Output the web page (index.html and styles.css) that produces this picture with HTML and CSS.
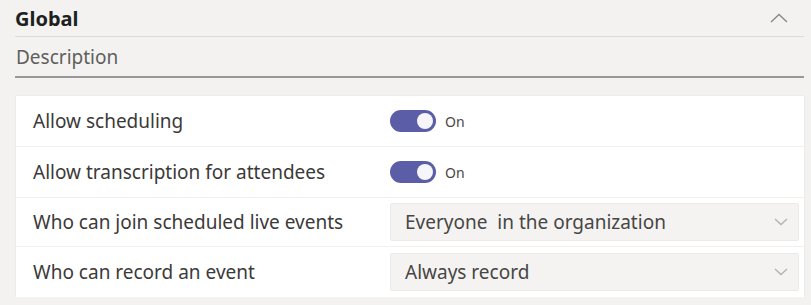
FILE: index.html
```html
<!DOCTYPE html>
<html lang="en">
<head>
    <meta charset="UTF-8">
    <title>Live events policy - Global</title>
    <link rel="stylesheet" href="styles.css">
</head>
<body>
    <div class="policy">
        <div class="policy-header">
            <h1>Global</h1>
            <svg class="collapse" width="18" height="10" viewBox="0 0 18 10">
                <path d="M1 9 L9 1.5 L17 9" fill="none" stroke="#8a8886" stroke-width="1.4"/>
            </svg>
        </div>
        <div class="description">Description</div>

        <div class="settings">
            <div class="row">
                <div class="label">Allow scheduling</div>
                <div class="control">
                    <span class="toggle"><span class="knob"></span></span>
                    <span class="toggle-text">On</span>
                </div>
            </div>
            <div class="row">
                <div class="label">Allow transcription for attendees</div>
                <div class="control">
                    <span class="toggle"><span class="knob"></span></span>
                    <span class="toggle-text">On</span>
                </div>
            </div>
            <div class="row row-short">
                <div class="label">Who can join scheduled live events</div>
                <div class="control">
                    <div class="dropdown">
                        <span>Everyone&nbsp; in the organization</span>
                        <svg width="14" height="8" viewBox="0 0 14 8"><path d="M1 1 L7 6.5 L13 1" fill="none" stroke="#b3b0ad" stroke-width="1.3"/></svg>
                    </div>
                </div>
            </div>
            <div class="row">
                <div class="label">Who can record an event</div>
                <div class="control">
                    <div class="dropdown">
                        <span>Always record</span>
                        <svg width="14" height="8" viewBox="0 0 14 8"><path d="M1 1 L7 6.5 L13 1" fill="none" stroke="#b3b0ad" stroke-width="1.3"/></svg>
                    </div>
                </div>
            </div>
        </div>
    </div>
</body>
</html>
```

FILE: styles.css
```css
body {
    margin: 0;
    background-color: #f3f2f1;
    font-family: "Noto Sans", "Open Sans", sans-serif;
    color: #484644;
}

.policy {
    padding: 4px 7px 0 15px;
}

.policy-header {
    display: flex;
    justify-content: space-between;
    align-items: center;
    height: 32px;
    border-bottom: 1px solid #dcdbda;
    padding-right: 16px;
}

.policy-header h1 {
    margin: 0;
    font-size: 20px;
    line-height: 26px;
    font-weight: 700;
    color: #201f1e;
    margin-top: -2px;
}

.collapse {
    margin-top: -4px;
}

.description {
    font-size: 19px;
    line-height: 26px;
    color: #605e5c;
    padding: 7px 0 0 1px;
    height: 32px;
    border-bottom: 2px solid #9a9896;
}

.settings {
    margin: 18px 0 0 1px;
    background-color: #ffffff;
    box-shadow: 0 0 2px rgba(0, 0, 0, 0.08);
}

.row {
    display: flex;
    align-items: center;
    height: 50px;
    border-bottom: 1px solid #f1f0ef;
}

.row-short {
    height: 48px;
}

.row:last-child {
    border-bottom: none;
}

.label {
    width: 357px;
    padding-left: 17px;
    font-size: 19px;
    line-height: 26px;
    color: #3b3a39;
}

.control {
    flex: 1;
    display: flex;
    align-items: center;
    padding-right: 5px;
}

.toggle {
    width: 46px;
    height: 22px;
    border-radius: 11px;
    background-color: #5b5ea6;
    display: flex;
    align-items: center;
    justify-content: flex-end;
    padding-right: 3px;
    box-sizing: border-box;
}

.knob {
    width: 16px;
    height: 16px;
    border-radius: 50%;
    background-color: #f5f5fa;
}

.toggle-text {
    margin-left: 9px;
    font-size: 14px;
    color: #484644;
}

.dropdown {
    flex: 1;
    height: 36px;
    display: flex;
    align-items: center;
    justify-content: space-between;
    padding: 0 10px 0 14px;
    background-color: #f4f3f2;
    border: 1px solid #eceae8;
    border-radius: 2px;
    font-size: 19px;
    line-height: 26px;
    color: #484644;
}
```
